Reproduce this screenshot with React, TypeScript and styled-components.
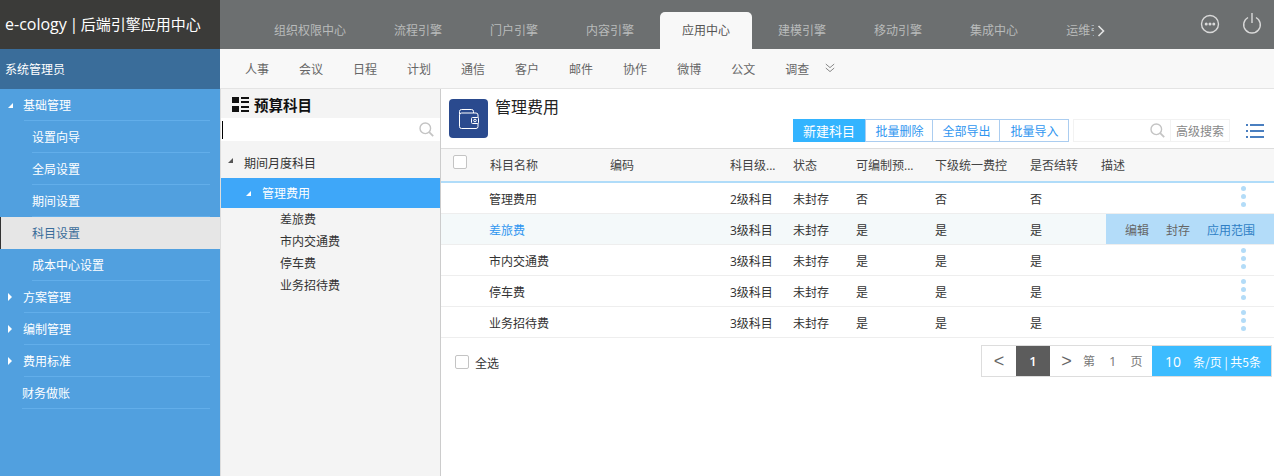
import React from "react";
import styled, { createGlobalStyle } from "styled-components";

const Global = createGlobalStyle`
  html, body { margin: 0; padding: 0; height: 100%; overflow: hidden; }
  body { font-family: "Open Sans", "Noto Sans CJK SC", sans-serif; font-size: 12px; color: #333; }
  * { box-sizing: border-box; }
`;

const Page = styled.div`display: flex; width: 1274px; height: 476px; overflow: hidden; background: #fff;`;
const Sidebar = styled.aside`width: 220px; flex: none; display: flex; flex-direction: column; background: #51a0df;`;
const Brand = styled.div`height: 49px; background: #3b3b39; color: #fff; font-size: 15px; line-height: 49px; padding-left: 5px; white-space: nowrap; word-spacing: -1.5px;`;
const BrandLatin = styled.span`font-size: 16px;`;
const UserBar = styled.div`height: 40px; background: #3a6d9a; color: #fff; font-size: 12px; line-height: 41px; padding-left: 5px;`;
const MenuRow = styled.div<{ $level: number; $active?: boolean }>`
  position: relative;
  height: 32px;
  line-height: 33px;
  width: 220px;
  color: ${(p) => (p.$active ? "#3a6d9a" : "#fff")};
  background: ${(p) => (p.$active ? "#e6e6e6" : "transparent")};
  border-left: ${(p) => (p.$active ? "1px solid #333" : "none")};
  padding-left: ${(p) => (p.$level === 1 ? (p.$active ? 31 : 32) : p.$level === 0 ? 23 : 22)}px;
`;
const MenuLine = styled.span<{ $level: number }>`
  position: absolute;
  bottom: 0;
  right: 10px;
  left: ${(p) => (p.$level === 1 ? 32 : p.$level === 0 ? 24 : 22)}px;
  height: 1px;
  background: #62aeea;
`;
const MenuCaret = styled.span<{ $open?: boolean }>`
  position: absolute;
  left: 8px;
  width: 0;
  height: 0;
  ${(p) =>
    p.$open
      ? `top: 14px; border-left: 5px solid transparent; border-bottom: 5px solid #fff;`
      : `top: 12px; border-top: 4px solid transparent; border-bottom: 4px solid transparent; border-left: 4px solid #fff;`}
`;

const Content = styled.div`flex: 1; min-width: 0; display: flex; flex-direction: column;`;
const TopBar = styled.header`height: 49px; flex: none; background: #6c6f70; display: flex; align-items: stretch;`;
const TabStrip = styled.nav`width: 844px; margin-left: 30px; padding-top: 12px; display: flex; overflow: hidden; height: 49px; flex: none;`;
const Tab = styled.div<{ $active?: boolean }>`
  flex: none;
  height: 37px;
  line-height: 37px;
  white-space: nowrap;
  padding: 0 ${(p) => (p.$active ? 22 : 24)}px;
  margin: 0 ${(p) => (p.$active ? 2 : 0)}px;
  color: ${(p) => (p.$active ? "#555" : "#b9bbbb")};
  background: ${(p) => (p.$active ? "#f8f8f8" : "transparent")};
  border-radius: ${(p) => (p.$active ? "5px 5px 0 0" : "0")};
`;
const TabMore = styled.div`width: 20px; padding: 24px 0 0 3px; flex: none;`;
const TopIcons = styled.div`margin-left: auto; display: flex; gap: 22px; padding: 14px 12px 0 0;`;

const SubNav = styled.nav`height: 40px; flex: none; background: #f8f8f8; border-bottom: 1px solid #e4e4e4; display: flex; align-items: center; padding-left: 25px; gap: 30px;`;
const SubItem = styled.span`color: #666; white-space: nowrap;`;
const SubMore = styled.span`margin-left: -14px; display: flex; margin-top: -2px;`;

const Body = styled.div`flex: 1; min-height: 0; display: flex;`;
const TreePanel = styled.section`width: 221px; flex: none; background: #f4f4f4; border-left: 1px solid #ddd; border-right: 1px solid #ccc; display: flex; flex-direction: column;`;
const TreeTitle = styled.div`height: 29px; display: flex; align-items: center; padding: 2px 0 0 11px; gap: 5px; font-size: 14.5px; font-weight: 700; color: #111;`;
const TreeSearch = styled.div`height: 23px; background: #fff; display: flex; align-items: center; justify-content: space-between; padding: 0 6px 0 1px;`;
const CaretBar = styled.span`width: 1px; height: 18px; background: #000;`;
const TreeRoot = styled.div`height: 37px; padding: 6px 0 0 23px; display: flex; align-items: center; position: relative; color: #333;`;
const TreeSelected = styled.div`height: 30px; padding-left: 41px; display: flex; align-items: center; position: relative; background: #3ea7f9; color: #fff;`;
const TreeCaret = styled.span<{ $left: number; $color: string }>`
  position: absolute;
  left: ${(p) => p.$left}px;
  top: 50%;
  margin-top: -2px;
  width: 0;
  height: 0;
  border-left: 5px solid transparent;
  border-bottom: 5px solid ${(p) => p.$color};
`;
const TreeChildren = styled.div`padding: 1px 0 0 59px;`;
const TreeChild = styled.div`height: 22px; line-height: 22px; color: #333;`;

const Main = styled.section`flex: 1; min-width: 0; display: flex; flex-direction: column;`;
const MainHead = styled.div`height: 59px; flex: none; padding: 10px 0 0 8px; display: flex;`;
const IconTile = styled.div`width: 39px; height: 39px; border-radius: 4px; background: #2a4a8e; display: flex; align-items: center; justify-content: center; flex: none;`;
const HeadTitle = styled.div`margin-left: 7px; margin-top: -3px; font-size: 16px; line-height: 22px; color: #222; width: 298px; flex: none;`;
const Toolbar = styled.div`height: 23px; margin-top: 20px; display: flex; align-items: stretch;`;
const PrimaryBtn = styled.div`width: 72px; background: #33b4ff; color: #fff; font-size: 13px; display: flex; align-items: center; justify-content: center;`;
const GhostBtn = styled.div<{ $w: number }>`
  width: ${(p) => p.$w}px;
  border: 1px solid #abcdf0;
  margin-right: -1px;
  padding-left: 1px;
  color: #2f96f0;
  display: flex;
  align-items: center;
  justify-content: center;
`;
const SearchBox = styled.div`width: 98px; margin-left: 5px; border: 1px solid #f2f2f2; display: flex; align-items: center; justify-content: flex-end; padding-right: 5px;`;
const SearchMore = styled.div`width: 59px; border: 1px solid #f2f2f2; border-left: none; color: #888; display: flex; align-items: center; justify-content: center;`;
const ListBtn = styled.div`margin-left: 16px; display: flex; align-items: center;`;

const cols = "49px 120px 120px 63px 63px 79px 95px 71px 1fr";
const HeadRow = styled.div`height: 35px; flex: none; display: grid; grid-template-columns: ${cols}; align-items: center; background: #f7f7f7; border-top: 1px solid #ddd; border-bottom: 2px solid #b0dcf9; color: #444; padding-bottom: 1px;`;
const Row = styled.div<{ $hover?: boolean }>`
  position: relative;
  height: 31px;
  flex: none;
  display: grid;
  grid-template-columns: ${cols};
  align-items: center;
  padding-top: 2px;
  border-bottom: 1px solid #eee;
  background: ${(p) => (p.$hover ? "#f4f9fa" : "#fff")};
  color: #333;
`;
const NameCell = styled.span<{ $link?: boolean }>`margin-left: -1px; color: ${(p) => (p.$link ? "#2f96f0" : "#333")};`;
const Box = styled.span`display: block; flex: none; width: 14px; height: 14px; border: 1px solid #c4c4c4; border-radius: 2px; background: #fff;`;
const CheckCell = styled.span`padding-left: 12px; margin-top: -6px;`;
const Dots = styled.span`position: absolute; right: 28px; top: 3px; display: flex; flex-direction: column; gap: 3px;`;
const Dot = styled.i`display: block; width: 5px; height: 5px; border-radius: 50%; background: #b3dcf8;`;
const Actions = styled.div`position: absolute; left: 665px; right: 0; top: 0; bottom: 0; padding: 2px 0 0 19px; background: #b3dcf9; display: flex; align-items: center; gap: 17px; color: #666;`;
const ActionLink = styled.span<{ $primary?: boolean }>`color: ${(p) => (p.$primary ? "#2f7fc5" : "#666")};`;

const Footer = styled.div`display: flex; align-items: flex-start; padding: 7px 2px 0 14px;`;
const SelectAll = styled.label`display: flex; align-items: center; gap: 6px; margin-top: 7px; color: #333;`;
const SelectText = styled.span`margin-top: 2px;`;
const Pager = styled.div`margin-left: auto; width: 291px; height: 32px; border: 1px solid #ddd; display: flex; align-items: stretch; color: #666;`;
const PagerArrow = styled.span<{ $w: number }>`flex: none; width: ${(p) => p.$w}px; font-family: "Liberation Sans", sans-serif; font-size: 18px; display: flex; align-items: center; justify-content: center; color: #666;`;
const PagerCurrent = styled.span`flex: none; width: 34px; background: #5c5c5c; color: #fff; font-weight: 600; font-size: 13px; display: flex; align-items: center; justify-content: center;`;
const PagerText = styled.span`flex: none; width: 69px; display: flex; align-items: center; gap: 14px; color: #777;`;
const PagerNum = styled.span`font-size: 13px;`;
const PagerSize = styled.span`flex: 1; min-width: 0; background: #3cbcff; color: #fff; display: flex; align-items: center; padding-left: 13px; gap: 12px; white-space: nowrap;`;
const PagerCount = styled.b`font-weight: 400; font-size: 14px;`;
const PagerTotal = styled.span`font-family: "Noto Sans CJK SC", sans-serif; font-size: 12px;`;

const Search = ({ size = 15 }: { size?: number }) => (
  <svg width={size} height={size} viewBox="0 0 15 15" fill="none" stroke="#c4c4c4" strokeWidth="1.4">
    <circle cx="6.3" cy="6.3" r="5.3" />
    <path d="M10.2 10.2 14.2 14.2" strokeWidth="1.8" />
  </svg>
);

const tabs = ["组织权限中心", "流程引擎", "门户引擎", "内容引擎", "应用中心", "建模引擎", "移动引擎", "集成中心", "运维引擎"];
const subs = ["人事", "会议", "日程", "计划", "通信", "客户", "邮件", "协作", "微博", "公文", "调查"];
const rows = [
  ["管理费用", "2级科目", "未封存", "否", "否", "否"],
  ["差旅费", "3级科目", "未封存", "是", "是", "是"],
  ["市内交通费", "3级科目", "未封存", "是", "是", "是"],
  ["停车费", "3级科目", "未封存", "是", "是", "是"],
  ["业务招待费", "3级科目", "未封存", "是", "是", "是"],
];
const menu: { t: string; level: number; open?: boolean; caret?: boolean; active?: boolean }[] = [
  { t: "基础管理", level: 0, open: true, caret: true },
  { t: "设置向导", level: 1 },
  { t: "全局设置", level: 1 },
  { t: "期间设置", level: 1 },
  { t: "科目设置", level: 1, active: true },
  { t: "成本中心设置", level: 1 },
  { t: "方案管理", level: 0, caret: true },
  { t: "编制管理", level: 0, caret: true },
  { t: "费用标准", level: 0, caret: true },
  { t: "财务做账", level: 2 },
];

export default function App() {
  return (
    <Page>
      <Global />
      <Sidebar>
        <Brand><BrandLatin>e-cology |</BrandLatin> 后端引擎应用中心</Brand>
        <UserBar>系统管理员</UserBar>
        {menu.map((m) => (
          <MenuRow key={m.t} $level={m.level} $active={m.active}>
            {m.caret && <MenuCaret $open={m.open} />}
            {m.t}
            {!m.active && <MenuLine $level={m.level} />}
          </MenuRow>
        ))}
      </Sidebar>
      <Content>
        <TopBar>
          <TabStrip>
            {tabs.map((t) => (
              <Tab key={t} $active={t === "应用中心"}>{t}</Tab>
            ))}
          </TabStrip>
          <TabMore>
            <svg width="8" height="12" viewBox="0 0 8 12" fill="none" stroke="#e4e4e4" strokeWidth="1.6">
              <path d="M1.5 1 6.5 6 1.5 11" />
            </svg>
          </TabMore>
          <TopIcons>
            <svg width="20" height="20" viewBox="0 0 20 20" fill="none" stroke="#d9d9d9" strokeWidth="1.4">
              <circle cx="10" cy="10" r="8.5" />
              <circle cx="6.2" cy="10" r=".8" fill="#d9d9d9" />
              <circle cx="10" cy="10" r=".8" fill="#d9d9d9" />
              <circle cx="13.8" cy="10" r=".8" fill="#d9d9d9" />
            </svg>
            <svg width="20" height="22" viewBox="0 0 20 22" fill="none" stroke="#d9d9d9" strokeWidth="1.4" style={{ marginTop: -2 }}>
              <path d="M6 5.5a8.3 8.3 0 1 0 8 0" />
              <path d="M10 1v10" />
            </svg>
          </TopIcons>
        </TopBar>
        <SubNav>
          {subs.map((s) => (
            <SubItem key={s}>{s}</SubItem>
          ))}
          <SubMore>
            <svg width="10" height="10" viewBox="0 0 10 10" fill="none" stroke="#888" strokeWidth="1">
              <path d="M.8 1 5 4.6 9.2 1M.8 5 5 8.6 9.2 5" />
            </svg>
          </SubMore>
        </SubNav>
        <Body>
          <TreePanel>
            <TreeTitle>
              <svg width="17" height="16" viewBox="0 0 17 16" fill="#111">
                <rect x="0" y="0" width="7" height="6" />
                <rect x="0" y="9" width="7" height="6" />
                <rect x="9" y="0" width="8" height="2" />
                <rect x="9" y="4" width="8" height="2" />
                <rect x="9" y="9" width="8" height="2" />
                <rect x="9" y="13" width="8" height="2" />
              </svg>
              预算科目
            </TreeTitle>
            <TreeSearch>
              <CaretBar />
              <Search />
            </TreeSearch>
            <TreeRoot>
              <TreeCaret $left={7} $color="#555" />
              期间月度科目
            </TreeRoot>
            <TreeSelected>
              <TreeCaret $left={25} $color="#fff" />
              管理费用
            </TreeSelected>
            <TreeChildren>
              {rows.slice(1).map((r) => (
                <TreeChild key={r[0]}>{r[0]}</TreeChild>
              ))}
            </TreeChildren>
          </TreePanel>
          <Main>
            <MainHead>
              <IconTile>
                <svg width="22" height="22" viewBox="0 0 22 22" fill="none" stroke="#fff" strokeWidth="1">
                  <path d="M1.5 6V3.5a2 2 0 0 1 2-2h10a2 2 0 0 1 2 2V5" />
                  <rect x="1.5" y="5" width="18.5" height="15.5" rx="2" />
                  <rect x="13.5" y="9.5" width="7" height="6" rx="1" fill="#2a4a8e" />
                  <circle cx="17" cy="12.5" r="1.3" />
                </svg>
              </IconTile>
              <HeadTitle>管理费用</HeadTitle>
              <Toolbar>
                <PrimaryBtn>新建科目</PrimaryBtn>
                <GhostBtn $w={68}>批量删除</GhostBtn>
                <GhostBtn $w={68}>全部导出</GhostBtn>
                <GhostBtn $w={70}>批量导入</GhostBtn>
                <SearchBox>
                  <Search />
                </SearchBox>
                <SearchMore>高级搜索</SearchMore>
                <ListBtn>
                  <svg width="18" height="14" viewBox="0 0 18 14" fill="#4a7fc0">
                    <rect x="0" y="0" width="2" height="2" />
                    <rect x="4" y="0" width="14" height="2" />
                    <rect x="0" y="6" width="2" height="2" />
                    <rect x="4" y="6" width="14" height="2" />
                    <rect x="0" y="12" width="2" height="2" />
                    <rect x="4" y="12" width="14" height="2" />
                  </svg>
                </ListBtn>
              </Toolbar>
            </MainHead>
            <HeadRow>
              <CheckCell><Box /></CheckCell>
              <span>科目名称</span>
              <span>编码</span>
              <span>科目级...</span>
              <span>状态</span>
              <span>可编制预...</span>
              <span>下级统一费控</span>
              <span>是否结转</span>
              <span>描述</span>
            </HeadRow>
            {rows.map((r, i) => (
              <Row key={r[0]} $hover={i === 1}>
                <span />
                <NameCell $link={i === 1}>{r[0]}</NameCell>
                <span />
                <span>{r[1]}</span>
                <span>{r[2]}</span>
                <span>{r[3]}</span>
                <span>{r[4]}</span>
                <span>{r[5]}</span>
                <span />
                {i === 1 ? (
                  <Actions>
                    <ActionLink>编辑</ActionLink>
                    <ActionLink>封存</ActionLink>
                    <ActionLink $primary>应用范围</ActionLink>
                  </Actions>
                ) : (
                  <Dots><Dot /><Dot /><Dot /></Dots>
                )}
              </Row>
            ))}
            <Footer>
              <SelectAll><Box /><SelectText>全选</SelectText></SelectAll>
              <Pager>
                <PagerArrow $w={34}>&lt;</PagerArrow>
                <PagerCurrent>1</PagerCurrent>
                <PagerArrow $w={33}>&gt;</PagerArrow>
                <PagerText>
                  <span>第</span>
                  <PagerNum>1</PagerNum>
                  <span>页</span>
                </PagerText>
                <PagerSize>
                  <PagerCount>10</PagerCount>
                  <PagerTotal>条/页 | 共5条</PagerTotal>
                </PagerSize>
              </Pager>
            </Footer>
          </Main>
        </Body>
      </Content>
    </Page>
  );
}
